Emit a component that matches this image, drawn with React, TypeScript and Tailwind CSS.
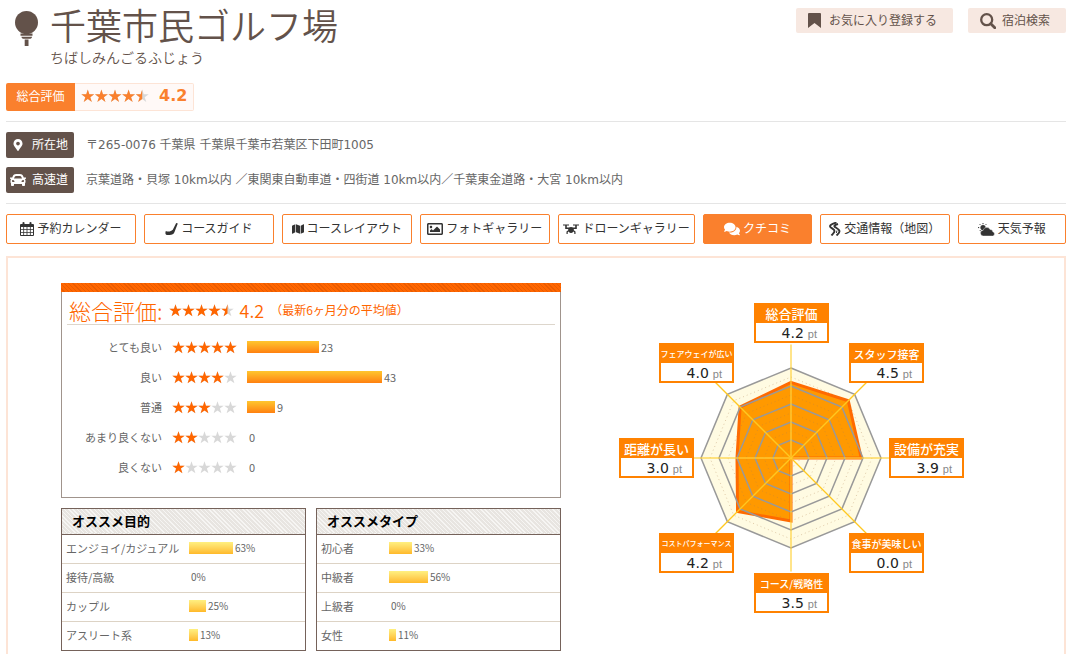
import { useId, type ReactNode } from "react";
import { FaCar, FaComments, FaMap, FaMapMarkerAlt, FaRegImage } from "react-icons/fa";

const SPOTS = [
  { label: "総合評価", value: 4.2, place: "left-[135px] top-0", size: "text-[13px]" },
  { label: "スタッフ接客", value: 4.5, place: "left-[230px] top-10", size: "text-[11px]" },
  { label: "設備が充実", value: 3.9, place: "left-[270px] top-[135px]", size: "text-[13px]" },
  { label: "食事が美味しい", value: 0, place: "left-[230px] top-[230px]", size: "text-[10px]" },
  { label: "コース/戦略性", value: 3.5, place: "left-[135px] top-[270px]", size: "text-[10px]" },
  { label: "コストパフォーマンス", value: 4.2, place: "left-10 top-[230px]", size: "text-[7px]" },
  { label: "距離が長い", value: 3, place: "left-0 top-[135px]", size: "text-[13px]" },
  { label: "フェアウェイが広い", value: 4, place: "left-10 top-10", size: "text-[8px]" },
];

const VOTES = [
  { label: "とても良い", stars: 5, count: 23 },
  { label: "良い", stars: 4, count: 43 },
  { label: "普通", stars: 3, count: 9 },
  { label: "あまり良くない", stars: 2, count: 0 },
  { label: "良くない", stars: 1, count: 0 },
];

const PURPOSES = [
  { label: "エンジョイ/カジュアル", percent: 63 },
  { label: "接待/高級", percent: 0 },
  { label: "カップル", percent: 25 },
  { label: "アスリート系", percent: 13 },
];

const TYPES = [
  { label: "初心者", percent: 33 },
  { label: "中級者", percent: 56 },
  { label: "上級者", percent: 0 },
  { label: "女性", percent: 11 },
];

function Stars({ value, className }: { value: number; className: string }) {
  const id = useId();
  const star = "M6.5 0.3 8 4.8H12.7L8.9 7.6 10.4 12.3 6.5 9.4 2.6 12.3 4.1 7.6 0.3 4.8H5Z";
  const row = [0, 1, 2, 3, 4].map((i) => (
    <path key={i} d={star} transform={`translate(${i * 13} 0)`} />
  ));
  return (
    <svg viewBox="0 0 65 13" className={`shrink-0 ${className}`} role="img" aria-label={`${value}`}>
      <clipPath id={id}>
        <rect width={value * 13} height="13" />
      </clipPath>
      <g fill="#d8d8d8">{row}</g>
      <g fill="currentColor" clipPath={`url(#${id})`}>
        {row}
      </g>
    </svg>
  );
}

function BallIcon() {
  return (
    <svg viewBox="0 0 24 36" className="h-9 w-6 shrink-0" fill="#63524a">
      <circle cx="12.500" cy="12.500" r="11.500" />
      <path d="M6.500 23.500h12v2.200h-12zM7.500 26.800h10.500c0 1.500-1 2-2.500 2H10c-1.500 0-2.500-.5-2.500-2zM10.700 29.500h3.800V36h-3.800z" />
    </svg>
  );
}

function BookmarkIcon() {
  return (
    <svg viewBox="0 0 13 15" className="h-[15px] w-[13px]" fill="#63524a">
      <path d="M1 0h11q1 0 1 1v14l-6.500-5L0 15V1q0-1 1-1z" />
    </svg>
  );
}

function SearchIcon() {
  return (
    <svg viewBox="0 0 16 16" className="size-4" fill="none" stroke="#63524a">
      <circle cx="6.700" cy="6.700" r="5.500" strokeWidth="2.300" />
      <path d="m10.800 10.800 4 4" strokeWidth="2.800" strokeLinecap="round" />
    </svg>
  );
}

function CalendarIcon() {
  return (
    <svg viewBox="0 0 14 14" className="size-3.5">
      <path
        fill="currentColor"
        fillRule="evenodd"
        d="M1 2h1.500V.8q0-.8 1-.8t1 .8V2h5V.8q0-.8 1-.8t1 .8V2H13q1 0 1 1v10q0 1-1 1H1q-1 0-1-1V3q0-1 1-1zM1 5v2.200h2.300V5zm3.100 0v2.200h2.500V5zm3.300 0v2.200h2.500V5zm3.300 0v2.200H13V5zM1 8v2.200h2.300V8zm3.100 0v2.200h2.500V8zm3.300 0v2.200h2.500V8zm3.300 0v2.200H13V8zM1 11v2h2.300v-2zm3.100 0v2h2.500v-2zm3.300 0v2h2.500v-2zm3.300 0v2H13v-2z"
      />
    </svg>
  );
}

function ClubIcon() {
  return (
    <svg viewBox="0 0 13 13" className="size-[13px]" fill="currentColor">
      <path d="M11.200 0 12.800.5 9.400 9.300C8.800 11.200 7 12 4.600 12H2.200C.3 12 0 10 .8 7.900c2.600 1.200 5 .6 7-1.200z" />
    </svg>
  );
}

function DroneIcon() {
  return (
    <svg viewBox="0 0 16 12" className="h-3 w-4" fill="currentColor">
      <path d="M0 1.500h6v1H3.800v2h2Q6.500 4 8 4t2.200.5h2v-2H10v-1h6v1h-2.200V6h-3v1.200l1.700 1.300V11h-1.200V9.200l-1-.7Q9.500 10 8 10T5.700 8.500l-1 .7V11H3.500V8.500l1.700-1.300V6h-3V2.500H0z" />
    </svg>
  );
}

function RoadIcon() {
  return (
    <svg viewBox="0 0 12 14" className="h-3.5 w-3" fill="none" stroke="currentColor">
      <path d="M7.500.5C4 1.500 1 2.500 1 4.200S5.500 7 5.500 9 3.500 12 2.500 13.500" strokeWidth="1.900" />
      <path d="M9 2C6.500 2.800 5 3.500 5.500 4.500S10.500 7 10.500 9.300 8.500 12.500 7.500 13.500" strokeWidth="1.900" />
      <path d="M8 8.500 7.300 11" />
    </svg>
  );
}

function WeatherIcon() {
  return (
    <svg viewBox="0 0 17 13" className="h-[13px] w-[17px]" fill="currentColor">
      <circle cx="5" cy="4.600" r="2.600" />
      <path d="M5 0v1.200M1.700 1.200l.9.9M0 4.600h1.200M8.300 1.200l-.9.9M1.700 8l.9-.9" stroke="currentColor" />
      <path
        d="M5.500 13a2.900 2.900 0 0 1-.3-5.800 3.600 3.600 0 0 1 6.800-.7 2.500 2.500 0 0 1 2.800 2.200A2.200 2.200 0 0 1 14.700 13z"
        stroke="#fff"
        strokeWidth=".4"
      />
    </svg>
  );
}

const NAV: { label: string; icon: ReactNode; grow: string; active?: boolean }[] = [
  { label: "予約カレンダー", icon: <CalendarIcon />, grow: "grow-[130]" },
  { label: "コースガイド", icon: <ClubIcon />, grow: "grow-[130]" },
  { label: "コースレイアウト", icon: <FaMap className="h-3.5 w-3" />, grow: "grow-[130]" },
  { label: "フォトギャラリー", icon: <FaRegImage className="size-4" />, grow: "grow-[130]" },
  { label: "ドローンギャラリー", icon: <DroneIcon />, grow: "grow-[138]" },
  { label: "クチコミ", icon: <FaComments className="size-4" />, grow: "grow-[108]", active: true },
  { label: "交通情報（地図）", icon: <RoadIcon />, grow: "grow-[130]" },
  { label: "天気予報", icon: <WeatherIcon />, grow: "grow-[108]" },
];

function InfoRow({ icon, label, children }: { icon: ReactNode; label: string; children: ReactNode }) {
  return (
    <div className="flex items-center gap-3">
      <dt className="flex h-[26px] w-[68px] shrink-0 items-center justify-between rounded-xs bg-[#63524a] pr-1.5 pl-1 text-white">
        <span className="flex w-4 justify-center">{icon}</span>
        {label}
      </dt>
      <dd>{children}</dd>
    </div>
  );
}

function ShareTable({
  title,
  rows,
  labelWidth,
}: {
  title: string;
  rows: { label: string; percent: number }[];
  labelWidth: string;
}) {
  return (
    <div className="flex-1 border border-[#75625a]">
      <table className="w-full table-fixed border-collapse text-[11px] leading-4 text-[#666]">
        <colgroup>
          <col className={labelWidth} />
          <col />
        </colgroup>
        <thead>
          <tr className="h-[25px] border-b border-[#75625a] bg-[repeating-linear-gradient(45deg,#f6f5f3_0_1px,#e8e5e1_1px_3px)]">
            <th colSpan={2} className="px-2.5 text-left text-[13px] font-bold text-black">
              {title}
            </th>
          </tr>
        </thead>
        <tbody>
          {rows.map((row) => (
            <tr key={row.label} className="h-[29px] border-b border-[#ddd3c5] last:border-0">
              <td className="pb-0.5 pl-1 whitespace-nowrap">{row.label}</td>
              <td className="pb-0.5">
                <div className="flex items-center gap-0.5">
                  <div
                    className="h-3 bg-linear-to-b from-[#fff080] to-[#ffb926]"
                    style={{ width: Math.floor(row.percent * 0.7) }}
                  />
                  <span className="text-[10px]">{row.percent}%</span>
                </div>
              </td>
            </tr>
          ))}
        </tbody>
      </table>
    </div>
  );
}

// Points go clockwise from the top, 18px per rating point.
function point(i: number, value: number) {
  const a = (i * Math.PI) / 4;
  return `${172 + Math.sin(a) * value * 18},${155 - Math.cos(a) * value * 18}`;
}

function ring(value: number) {
  return SPOTS.map((_, i) => point(i, value)).join(" ");
}

function Radar() {
  return (
    <div className="relative mt-5 h-[310px] w-[345px] shrink-0">
      <svg viewBox="0 0 345 310" className="size-full" fill="none">
        <polygon points={ring(5)} fill="#fffbe2" />
        <polygon
          points={SPOTS.map((s, i) => point(i, s.value)).join(" ")}
          fill="#ff9900"
          stroke="#ff6a00"
          strokeWidth="3"
        />
        {[0.5, 1.5, 2.5, 3.5, 4.5].map((v) => (
          <polygon key={v} points={ring(v)} stroke="#b08050" strokeOpacity=".4" strokeDasharray="1 3" />
        ))}
        {[1, 2, 3, 4, 5].map((v) => (
          <polygon key={v} points={ring(v)} stroke="#999" strokeWidth="1.500" />
        ))}
        {SPOTS.map((s, i) => (
          <polyline
            key={s.label}
            points={`172,155 ${point(i, 6.3)}`}
            stroke={i % 2 ? "#ffc820" : "#ffd23c"}
            strokeOpacity={i % 2 ? 1 : 0.6}
            strokeWidth={i % 2 ? 1.3 : 2}
          />
        ))}
      </svg>
      {SPOTS.map((s) => (
        <div key={s.label} className={`absolute h-10 w-[75px] border-2 border-[#ff8200] bg-white ${s.place}`}>
          <div
            className={`flex h-[18px] items-center justify-center bg-[#ff8200] font-medium whitespace-nowrap text-white ${s.size}`}
          >
            {s.label}
          </div>
          <div className="flex h-[18px] items-baseline justify-end gap-1 pr-2.5 font-['DejaVu_Sans',sans-serif] text-sm leading-5 text-[#222]">
            {s.value.toFixed(1)}
            <span className="font-['Liberation_Sans',sans-serif] text-[11px] text-[#888]">pt</span>
          </div>
        </div>
      ))}
    </div>
  );
}

export default function App() {
  return (
    <div className="bg-white pt-2 pr-2 pl-1.5 font-['DejaVu_Sans','Noto_Sans_CJK_JP',sans-serif] text-xs text-[#666]">
      <header className="flex items-start justify-between">
        <div className="flex gap-3 pl-2">
          <div className="pt-0.5">
            <BallIcon />
          </div>
          <div className="text-[#63524a]">
            <h1 className="pt-0.5 text-4xl leading-9 font-[350]">千葉市民ゴルフ場</h1>
            <p className="mt-0.5 text-sm leading-5 font-[350]">ちばしみんごるふじょう</p>
          </div>
        </div>
        <div className="flex gap-[15px] text-[#63524a]">
          <button type="button" className="flex h-[25px] items-center gap-2 rounded-xs bg-[#f7e8e1] pr-4 pl-3">
            <BookmarkIcon />
            お気に入り登録する
          </button>
          <button type="button" className="flex h-[25px] items-center gap-1.5 rounded-xs bg-[#f7e8e1] pr-4 pl-3">
            <SearchIcon />
            宿泊検索
          </button>
        </div>
      </header>

      <div className="mt-[15px] flex h-7">
        <span className="flex w-[69px] items-center justify-center rounded-l-xs bg-[#fa802d] text-white">総合評価</span>
        <span className="flex items-center gap-2.5 rounded-r-xs border border-l-0 border-[#fde4d6] bg-[#fff9f7] pr-1.5 pb-0.5 pl-1.5 text-base font-bold text-[#fa802d]">
          <Stars value={4.5} className="h-3.5 w-[68px]" />
          4.2
        </span>
      </div>

      <dl className="mt-2.5 flex flex-col gap-[9px] border-y border-[#e5e5e5] py-2.5">
        <InfoRow icon={<FaMapMarkerAlt className="size-3" />} label="所在地">
          〒265-0076 千葉県 千葉県千葉市若葉区下田町1005
        </InfoRow>
        <InfoRow icon={<FaCar className="size-4" />} label="高速道">
          京葉道路・貝塚 10km以内 ／東関東自動車道・四街道 10km以内／千葉東金道路・大宮 10km以内
        </InfoRow>
      </dl>

      <nav className="mt-2.5 flex gap-2">
        {NAV.map((item) => (
          <a
            key={item.label}
            href="#"
            className={`flex h-[30px] basis-0 items-center justify-center gap-[3px] rounded-xs border border-[#fa802d] whitespace-nowrap ${item.grow} ${
              item.active ? "bg-[#fa802d] text-white" : "text-[#333]"
            }`}
          >
            {item.icon}
            {item.label}
          </a>
        ))}
      </nav>

      <main className="mt-3 flex gap-[58px] border-2 border-b-0 border-[#fde4d6] px-[53px] pt-[25px] pb-[3px] font-['Noto_Sans_CJK_JP',sans-serif]">
        <div className="max-w-[500px] flex-1">
          <section>
            <div className="h-[9px] bg-[repeating-linear-gradient(45deg,#ff6600_0_2px,#ea5c00_2px_3px)]" />
            <div className="border border-t-0 border-[#a0948c] px-[5px] pb-[15px]">
              <div className="flex h-[33px] items-center gap-1.5 border-b border-[#ddd6cc] pt-1 pl-0.5 text-[#ff6600]">
                <h2 className="text-[22px] leading-6 font-light">総合評価:</h2>
                <Stars value={4.5} className="h-[13px] w-[65px]" />
                <span className="text-lg leading-6 font-[350]">4.2</span>
                <span className="text-xs">（最新6ヶ月分の平均値）</span>
              </div>
              <ul className="mt-[7px]">
                {VOTES.map((v) => (
                  <li key={v.label} className="flex h-[30px] items-center">
                    <span className="w-[95px] text-right text-[11px]">{v.label}</span>
                    <Stars value={v.stars} className="mr-2.5 ml-2.5 h-[13px] w-[65px] text-[#ff6600]" />
                    <div
                      className="h-3 bg-linear-to-b from-[#ffc62e] to-[#ff800f]"
                      style={{ width: Math.round(v.count * 3.14) }}
                    />
                    <span className="pl-0.5 text-[11px]">{v.count}</span>
                  </li>
                ))}
              </ul>
            </div>
          </section>
          <div className="mt-2.5 flex gap-2.5">
            <ShareTable title="オススメ目的" rows={PURPOSES} labelWidth="w-[127px]" />
            <ShareTable title="オススメタイプ" rows={TYPES} labelWidth="w-[72px]" />
          </div>
        </div>
        <Radar />
      </main>
    </div>
  );
}
